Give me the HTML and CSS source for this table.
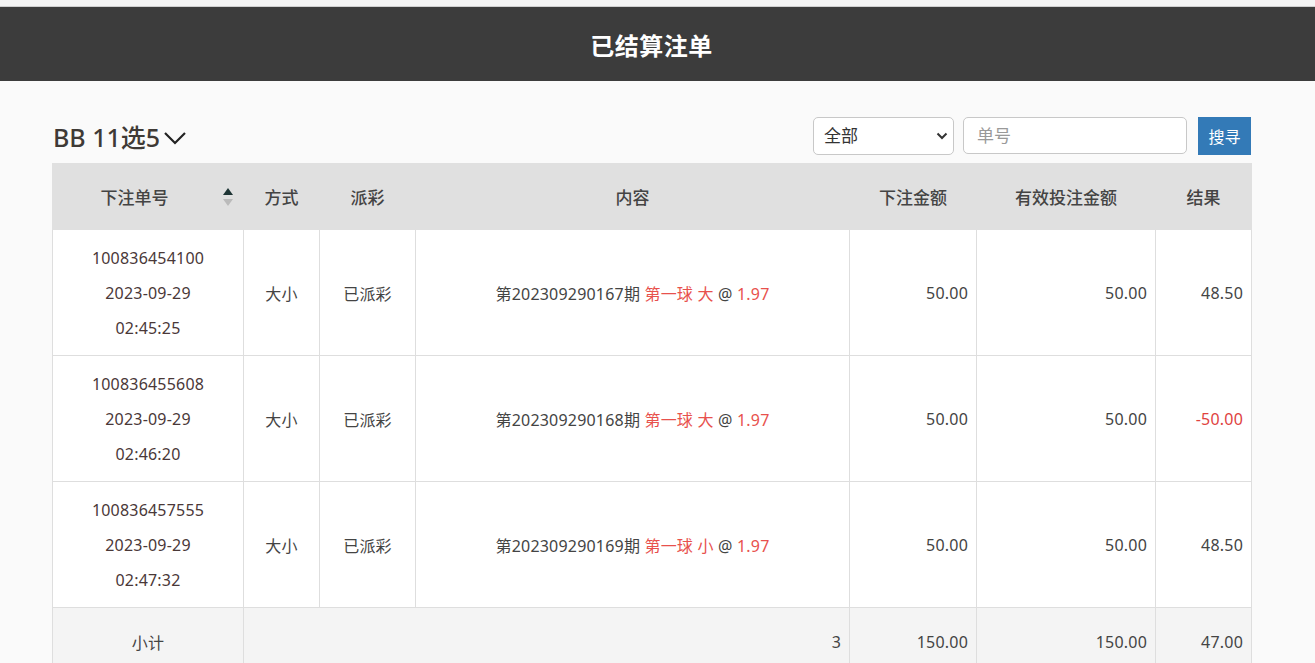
FILE: index.html
```html
<!DOCTYPE html>
<html lang="zh">
<head>
<meta charset="utf-8">
<title>已结算注单</title>
<link rel="stylesheet" href="styles.css">
</head>
<body>
<div class="topstrip"></div>
<header class="topbar"><h1 class="topbar-title">已结算注单</h1></header>
<main class="content">
  <div class="toolbar">
    <div class="game-title">BB 11选5
      <svg class="game-chevron" width="24" height="14" viewBox="0 0 24 14"><path d="M2 2 L12 12 L22 2" fill="none" stroke="#222" stroke-width="2.2"/></svg>
    </div>
    <div class="filters">
      <div class="select-wrap">
        <select class="filter-select"><option>全部</option></select>
        <svg class="select-arrow" width="12" height="8" viewBox="0 0 12 8"><path d="M1.5 1.5 L6 6 L10.5 1.5" fill="none" stroke="#333" stroke-width="2"/></svg>
      </div>
      <input class="filter-input" type="text" placeholder="单号">
      <button class="search-btn">搜寻</button>
    </div>
  </div>
  <table class="bets">
    <colgroup>
      <col class="c1"><col class="c2"><col class="c3"><col class="c4"><col class="c5"><col class="c6"><col class="c7">
    </colgroup>
    <thead>
      <tr>
        <th class="th-sort">下注单号
          <span class="sort-icon"><svg width="10" height="20" viewBox="0 0 10 20"><path d="M5 1 L10 8 L0 8 Z" fill="#1e3535"/><path d="M5 19 L10 12 L0 12 Z" fill="#bbb"/></svg></span>
        </th>
        <th>方式</th>
        <th>派彩</th>
        <th>内容</th>
        <th>下注金额</th>
        <th>有效投注金额</th>
        <th>结果</th>
      </tr>
    </thead>
    <tbody>
      <tr>
        <td class="order"><div>100836454100</div><div>2023-09-29</div><div>02:45:25</div></td>
        <td>大小</td>
        <td>已派彩</td>
        <td>第202309290167期 <span class="red">第一球 大</span> @ <span class="red">1.97</span></td>
        <td class="num">50.00</td>
        <td class="num">50.00</td>
        <td class="num">48.50</td>
      </tr>
      <tr>
        <td class="order"><div>100836455608</div><div>2023-09-29</div><div>02:46:20</div></td>
        <td>大小</td>
        <td>已派彩</td>
        <td>第202309290168期 <span class="red">第一球 大</span> @ <span class="red">1.97</span></td>
        <td class="num">50.00</td>
        <td class="num">50.00</td>
        <td class="num red">-50.00</td>
      </tr>
      <tr>
        <td class="order"><div>100836457555</div><div>2023-09-29</div><div>02:47:32</div></td>
        <td>大小</td>
        <td>已派彩</td>
        <td>第202309290169期 <span class="red">第一球 小</span> @ <span class="red">1.97</span></td>
        <td class="num">50.00</td>
        <td class="num">50.00</td>
        <td class="num">48.50</td>
      </tr>
      <tr class="subtotal">
        <td>小计</td>
        <td colspan="3" class="num">3</td>
        <td class="num">150.00</td>
        <td class="num">150.00</td>
        <td class="num">47.00</td>
      </tr>
    </tbody>
  </table>
</main>
</body>
</html>
```

FILE: styles.css
```css
html, body {
  margin: 0;
  padding: 0;
}
body {
  background: #fafafa;
  font-family: "Noto Sans", "Noto Sans CJK SC", sans-serif;
  color: #333;
  font-size: 16px;
}
.topstrip {
  height: 6px;
  background: #f4f4f4;
  border-bottom: 1px solid #cfcfcf;
}
.topbar {
  background: #3c3c3c;
  height: 74px;
  display: flex;
  align-items: center;
  justify-content: center;
  padding-right: 12px;
}
.topbar-title {
  margin: 0;
  color: #fff;
  font-size: 24px;
  font-weight: 700;
  letter-spacing: 0.5px;
}
.content {
  width: 1199px;
  margin: 36px 0 0 52px;
}
.toolbar {
  display: flex;
  justify-content: space-between;
  align-items: center;
  height: 37px;
  margin-bottom: 9px;
}
.game-title {
  display: flex;
  align-items: center;
  font-size: 25px;
  font-weight: 500;
  color: #3f3a36;
  padding-left: 1px;
}
.game-chevron {
  margin-left: 3px;
  margin-top: 4px;
}
.filters {
  display: flex;
  align-items: center;
  gap: 9px;
}
.select-wrap {
  position: relative;
}
.filter-select {
  appearance: none;
  -webkit-appearance: none;
  width: 141px;
  height: 38px;
  border: 1px solid #c8c8c8;
  border-radius: 5px;
  background: #fff;
  font-family: inherit;
  font-size: 17px;
  color: #333;
  padding: 0 10px;
}
.select-arrow {
  position: absolute;
  right: 6px;
  top: 15px;
  pointer-events: none;
}
.filter-input {
  width: 224px;
  height: 37px;
  box-sizing: border-box;
  border: 1px solid #c8c8c8;
  border-radius: 5px;
  background: #fff;
  font-family: inherit;
  font-size: 17px;
  padding: 0 13px;
  color: #333;
}
.filter-input::placeholder {
  color: #999;
}
.search-btn {
  margin-left: 2px;
  height: 38px;
  width: 53px;
  border: none;
  background: #337ab7;
  color: #fff;
  font-family: inherit;
  font-size: 16px;
  padding: 0;
}
.bets {
  width: 1199px;
  border-collapse: collapse;
  table-layout: fixed;
  background: #fff;
}
.c1 { width: 191px; }
.c2 { width: 76px; }
.c3 { width: 96px; }
.c4 { width: 434px; }
.c5 { width: 127px; }
.c6 { width: 179px; }
.c7 { width: 96px; }
.bets th {
  background: #e0e0e0;
  height: 66px;
  padding: 0 8px;
  font-weight: 500;
  font-size: 17px;
  color: #444;
  text-align: center;
  border: 1px solid #e0e0e0;
  box-sizing: border-box;
}
.bets th.th-sort {
  position: relative;
  padding-right: 35px;
}
.sort-icon {
  position: absolute;
  right: 10px;
  top: 23px;
  line-height: 0;
}
.bets td {
  border: 1px solid #dedede;
  text-align: center;
  padding: 1px 8px 0;
  height: 124px;
  font-size: 16px;
  color: #444;
  letter-spacing: 0.2px;
}
.bets td.order {
  line-height: 35px;
  color: #4a3838;
}
.bets td.num {
  text-align: right;
}
.red {
  color: #e8514d;
}
.bets td.red {
  color: #e0433f;
}
.subtotal td {
  background: #f4f4f4;
  height: 65px;
  vertical-align: middle;
}
```
